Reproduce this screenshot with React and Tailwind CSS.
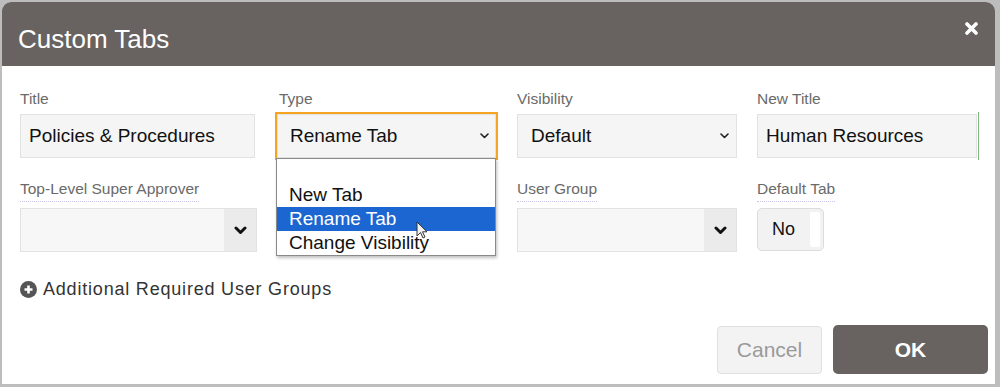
import React from "react";

const font = { fontFamily: '"Liberation Sans", Arial, sans-serif' };

function Chevron({ bold }) {
  if (bold) {
    return (
      <svg width="13" height="9" viewBox="0 0 13 9" fill="none">
        <path d="M2 2l4.5 4.5L11 2" stroke="#111" strokeWidth="3" strokeLinecap="round" strokeLinejoin="round" />
      </svg>
    );
  }
  return (
    <svg width="9" height="6" viewBox="0 0 9 6" fill="none">
      <path d="M1 1l3.5 3.5L8 1" stroke="#222" strokeWidth="1.6" strokeLinecap="round" strokeLinejoin="round" />
    </svg>
  );
}

function Label({ children, underline }) {
  return (
    <div className={(underline ? "h-[22px]" : "h-[18px]") + " mb-[6px] flex"}>
      <span
        className={
          "text-[15.5px] leading-[18px] text-[#6a6a6a] " +
          (underline ? "border-b border-dotted border-[#c9c6ea] pb-[3px] h-[22px]" : "")
        }
      >
        {children}
      </span>
    </div>
  );
}

export default function App() {
  return (
    <div className="w-[1000px] h-[387px] bg-[#bdbdbd] overflow-hidden" style={font}>
      <div className="ml-[2px] mt-[2px] w-[993px] h-[382px] bg-white rounded-t-[9px] flex flex-col relative">
        {/* Header */}
        <div className="h-[64px] bg-[#686361] rounded-t-[9px] flex justify-between px-[16px] shrink-0">
          <div className="mt-[24px] text-[26px] leading-[26px] text-white">Custom Tabs</div>
          <div className="mt-[20px] mr-[1px]">
            <svg width="13" height="13" viewBox="0 0 13 13">
              <path d="M2 2l9 9M11 2l-9 9" stroke="white" strokeWidth="3.6" strokeLinecap="round" />
            </svg>
          </div>
        </div>

        {/* Body */}
        <div className="pl-[18px] pt-[24px]">
          <div className="grid grid-cols-[237px_219px_221px_221px] gap-x-[20px]">
            {/* Row 1 */}
            <div>
              <Label>Title</Label>
              <div className="w-[235px] h-[44px] bg-[#f5f5f5] border border-[#e2e2e2] flex items-center pl-[8px] text-[19px] text-[#111]">
                Policies &amp; Procedures
              </div>
            </div>
            <div className="relative">
              <div className="pl-[2px]">
                <Label>Type</Label>
              </div>
              <div className="h-[44px] bg-[#f5f5f5] outline-2 outline-[#f5a522] border border-[#e2e2e2] flex items-center justify-between pl-[12px] pr-[6px] text-[19px] text-[#111]">
                <span>Rename Tab</span>
                <Chevron />
              </div>
              {/* Dropdown list */}
              <div className="absolute left-[-1px] top-[68px] w-[220px] z-10 bg-white border border-[#8a8a8a] shadow-[1px_2px_3px_rgba(0,0,0,0.25)] text-[19px] text-[#111]">
                <div className="h-[24px]" />
                <div className="h-[24px] leading-[24px] pl-[12px]">New Tab</div>
                <div className="h-[24px] leading-[24px] pl-[12px] bg-[#1b66d0] text-white relative">
                  Rename Tab
                  <svg className="absolute left-[139px] top-[14px]" width="12" height="18" viewBox="0 0 12 18">
                    <path d="M1 1v14l3.5-3.5 2.5 5.5 2-1-2.5-5.2H11z" fill="#f2f2f2" stroke="#333" strokeWidth="1" strokeLinejoin="round" />
                  </svg>
                </div>
                <div className="h-[24px] leading-[24px] pl-[12px]">Change Visibility</div>
              </div>
            </div>
            <div className="pl-[1px]">
              <Label>Visibility</Label>
              <div className="h-[44px] bg-[#f5f5f5] border border-[#e2e2e2] flex items-center justify-between pl-[13px] pr-[7px] text-[19px] text-[#111]">
                <span>Default</span>
                <Chevron />
              </div>
            </div>
            <div className="relative">
              <Label>New Title</Label>
              <div className="w-[220px] h-[44px] bg-[#f5f5f5] border border-[#e2e2e2] flex items-center pl-[8px] text-[19px] text-[#111]">
                Human Resources
              </div>
              <div className="absolute right-[-1px] top-[22px] w-[1px] h-[48px] bg-[#7fb57f]" />
            </div>

            {/* Row 2 */}
            <div className="mt-[22px]">
              <Label underline>Top-Level Super Approver</Label>
              <div className="h-[44px] bg-[#f7f7f7] border border-[#e2e2e2] flex">
                <div className="flex-1" />
                <div className="w-[32px] bg-[#ebebeb] flex items-center justify-center">
                  <Chevron bold />
                </div>
              </div>
            </div>
            <div className="mt-[22px]" />
            <div className="mt-[22px] pl-[1px]">
              <Label underline>User Group</Label>
              <div className="h-[44px] bg-[#f7f7f7] border border-[#e2e2e2] flex">
                <div className="flex-1" />
                <div className="w-[32px] bg-[#ebebeb] flex items-center justify-center">
                  <Chevron bold />
                </div>
              </div>
            </div>
            <div className="mt-[22px]">
              <Label underline>Default Tab</Label>
              <div className="w-[67px] h-[43px] mt-[1px] bg-[#f2f2f2] border border-[#dcdcdc] rounded-[5px] flex items-center pl-[14px] pr-[3px] justify-between text-[18px] text-[#111]">
                <span>No</span>
                <div className="w-[10px] h-[35px] bg-white rounded-[2px]" />
              </div>
            </div>
          </div>

          {/* Additional */}
          <div className="mt-[28px] h-[18px] flex items-center gap-[6px]">
            <svg width="17" height="17" viewBox="0 0 17 17">
              <circle cx="8.5" cy="8.5" r="8.5" fill="#555" />
              <path d="M8.5 4.5v8M4.5 8.5h8" stroke="white" strokeWidth="2.6" />
            </svg>
            <span className="text-[18px] leading-[18px] tracking-[0.8px] text-[#333]">
              Additional Required User Groups
            </span>
          </div>
        </div>

        {/* Footer */}
        <div className="mt-[27px] flex justify-end gap-[11px] pr-[7px]">
          <button className="w-[105px] h-[48px] mt-[1px] bg-[#f3f3f4] border border-[#e0e0e0] rounded-[4px] text-[21px] text-[#9a9a9a]">
            Cancel
          </button>
          <button className="w-[155px] h-[49px] bg-[#686361] rounded-[5px] text-[21px] font-bold text-white">
            OK
          </button>
        </div>
      </div>
    </div>
  );
}
